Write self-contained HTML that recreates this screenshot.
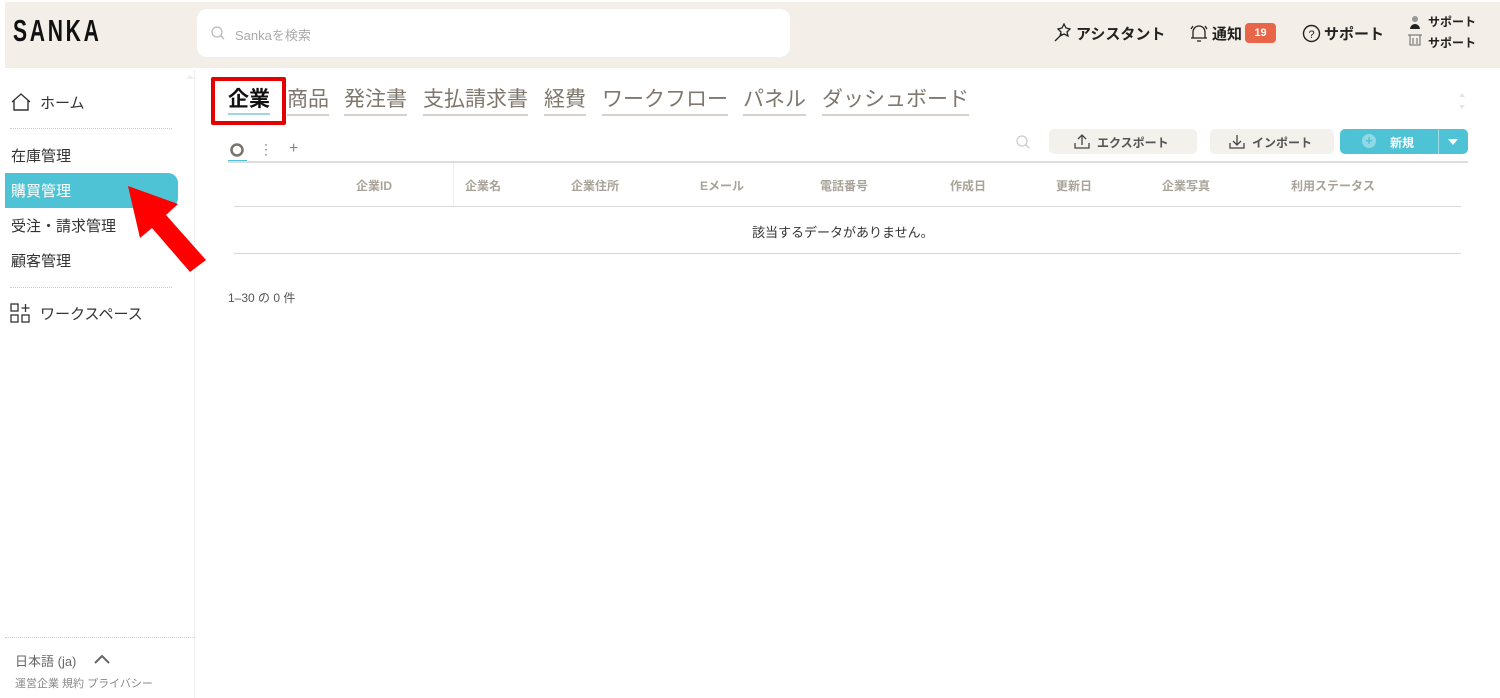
<!DOCTYPE html>
<html><head><meta charset="utf-8"><style>
*{box-sizing:border-box;margin:0;padding:0}
body{width:1500px;height:698px;overflow:hidden;background:#fff;font-family:"Liberation Sans","Noto Sans CJK JP",sans-serif;color:#333;position:relative}
.a{position:absolute;white-space:nowrap}
#hdr{position:absolute;left:5px;top:2px;width:1495px;height:66px;background:#f3efe8}
.th{position:absolute;top:177px;font-size:12px;color:#a9a39a;font-weight:bold}
.tab{position:absolute;top:87px;font-size:21px;color:#7f776d;border-bottom:2px solid #d6d1ca;padding-bottom:1px;line-height:26px}
.btn{position:absolute;top:129px;height:25px;border-radius:5px;background:#f3f1ec;font-size:12px;font-weight:bold;color:#555;line-height:25px}
.si{position:absolute;left:11px;font-size:15px}
</style></head><body>
<div id="hdr"></div>
<div class="a" style="left:13px;top:13px;font-size:31px;font-weight:bold;letter-spacing:4px;color:#111;transform:scaleX(.68);transform-origin:left">SANKA</div>
<div class="a" style="left:197px;top:9px;width:593px;height:48px;background:#fff;border-radius:10px"></div>
<svg class="a" style="left:210px;top:25px" width="16" height="16"><circle cx="7" cy="7" r="5" fill="none" stroke="#bbb" stroke-width="1.3"/><line x1="10.5" y1="10.5" x2="14" y2="14" stroke="#bbb" stroke-width="1.5"/></svg>
<div class="a" style="left:235px;top:25px;font-size:13px;color:#aaa">Sankaを検索</div>
<svg class="a" style="left:1053px;top:23px" width="20" height="20"><path d="M2 18L9 11M9 5l2-4 2 4 4 1-3 3 1 4-4-2-4 2 1-4-3-3z" fill="none" stroke="#222" stroke-width="1.3"/></svg>
<div class="a" style="left:1076px;top:23px;font-size:15px;font-weight:bold;color:#222">アシスタント</div>
<svg class="a" style="left:1189px;top:23px" width="20" height="20"><path d="M4 15V9a6 6 0 0112 0v6M2 15h16M8 18h4M2 6l2-3M18 6l-2-3" fill="none" stroke="#222" stroke-width="1.3"/></svg>
<div class="a" style="left:1212px;top:23px;font-size:15px;font-weight:bold;color:#222">通知</div>
<div class="a" style="left:1245px;top:23px;width:31px;height:20px;background:#e8654a;border-radius:4px;color:#fff;font-size:11px;font-weight:bold;text-align:center;line-height:20px">19</div>
<svg class="a" style="left:1302px;top:24px" width="19" height="19"><circle cx="9.5" cy="9.5" r="8" fill="none" stroke="#222" stroke-width="1.4"/><text x="9.5" y="14" font-size="11" text-anchor="middle" fill="#222" font-family="Liberation Sans">?</text></svg>
<div class="a" style="left:1324px;top:23px;font-size:15px;font-weight:bold;color:#222">サポート</div>
<svg class="a" style="left:1407px;top:14px" width="16" height="36"><circle cx="8" cy="5" r="3" fill="#999"/><path d="M3 15a5 5 0 0110 0z" fill="#222"/><path d="M1 21h14M3 21v10h10V21M6 24v6M10 24v6" fill="none" stroke="#666" stroke-width="1"/></svg>
<div class="a" style="left:1428px;top:13px;font-size:12px;font-weight:bold;color:#222">サポート</div>
<div class="a" style="left:1428px;top:34px;font-size:12px;font-weight:bold;color:#222">サポート</div>

<div class="a" style="left:194px;top:70px;width:1px;height:628px;background:#eee"></div>
<svg class="a" style="left:10px;top:92px" width="22" height="20"><path d="M2 10L11 2l9 8M4 8v10h14V8" fill="none" stroke="#333" stroke-width="1.4"/></svg>
<div class="a" style="left:40px;top:92px;font-size:15px">ホーム</div>
<div class="a" style="left:10px;top:128px;width:162px;border-top:1px dotted #ccc"></div>
<div class="si" style="top:145px">在庫管理</div>
<div class="a" style="left:5px;top:173px;width:173px;height:35px;background:#4ec3d6;border-radius:0 10px 10px 0"></div>
<div class="si" style="top:180px;color:#fff">購買管理</div>
<div class="si" style="top:215px">受注・請求管理</div>
<div class="si" style="top:250px">顧客管理</div>
<div class="a" style="left:10px;top:287px;width:162px;border-top:1px dotted #ccc"></div>
<svg class="a" style="left:10px;top:303px" width="22" height="22"><rect x="1" y="1" width="7" height="7" fill="none" stroke="#333" stroke-width="1.3"/><rect x="1" y="12" width="7" height="7" fill="none" stroke="#333" stroke-width="1.3"/><rect x="12" y="12" width="7" height="7" fill="none" stroke="#333" stroke-width="1.3"/><path d="M15.5 1v8M11.5 5h8" stroke="#333" stroke-width="1.3"/></svg>
<div class="a" style="left:40px;top:303px;font-size:15px">ワークスペース</div>
<svg class="a" style="left:186px;top:74px" width="8" height="6"><path d="M0 5l4-4 4 4z" fill="#eee"/></svg>
<div class="a" style="left:5px;top:637px;width:190px;border-top:1px dotted #ccc"></div>
<div class="a" style="left:15px;top:651px;font-size:13px;color:#666">日本語 (ja)</div>
<svg class="a" style="left:93px;top:653px" width="18" height="12"><path d="M2 10l7-7 7 7" fill="none" stroke="#666" stroke-width="2"/></svg>
<div class="a" style="left:15px;top:675px;font-size:11px;color:#888">運営企業 規約 プライバシー</div>

<div class="a" style="left:211px;top:77px;width:75px;height:48px;border:4px solid #e50000;border-radius:2px"></div>
<div class="a" style="left:228px;top:87px;font-size:21px;font-weight:bold;color:#111;line-height:26px;border-bottom:2px solid #9fd7e0">企業</div>
<div class="tab" style="left:287px">商品</div>
<div class="tab" style="left:344px">発注書</div>
<div class="tab" style="left:423px">支払請求書</div>
<div class="tab" style="left:544px">経費</div>
<div class="tab" style="left:602px">ワークフロー</div>
<div class="tab" style="left:743px">パネル</div>
<div class="tab" style="left:822px">ダッシュボード</div>
<svg class="a" style="left:1458px;top:91px" width="8" height="20"><path d="M1 6l3-4 3 4zM1 14l3 4 3-4z" fill="#e8e4de"/></svg>

<svg class="a" style="left:228px;top:142px" width="20" height="18"><circle cx="9" cy="8" r="5.5" fill="none" stroke="#7a736a" stroke-width="2.5"/></svg>
<div class="a" style="left:228px;top:160px;width:19px;height:2px;background:#4ec3d6"></div>
<div class="a" style="left:259px;top:141px;font-size:14px;color:#888">⋮</div>
<div class="a" style="left:289px;top:140px;font-size:16px;color:#888">+</div>
<svg class="a" style="left:1015px;top:134px" width="16" height="16"><circle cx="7" cy="7" r="5" fill="none" stroke="#ccc" stroke-width="1.3"/><line x1="10.5" y1="10.5" x2="14" y2="14" stroke="#ccc" stroke-width="1.5"/></svg>
<div class="btn" style="left:1049px;width:148px"></div>
<svg class="a" style="left:1074px;top:133px" width="16" height="16"><path d="M1 10v5h14v-5M8 12V2M4 6l4-4 4 4" fill="none" stroke="#444" stroke-width="1.3"/></svg>
<div class="a" style="left:1097px;top:134px;font-size:12px;font-weight:bold;color:#555">エクスポート</div>
<div class="btn" style="left:1210px;width:124px"></div>
<svg class="a" style="left:1229px;top:133px" width="16" height="16"><path d="M1 10v5h14v-5M8 2v10M4 8l4 4 4-4" fill="none" stroke="#444" stroke-width="1.3"/></svg>
<div class="a" style="left:1252px;top:134px;font-size:12px;font-weight:bold;color:#555">インポート</div>
<div class="a" style="left:1340px;top:129px;width:128px;height:25px;background:#4ec3d6;border-radius:5px"></div>
<div class="a" style="left:1438px;top:129px;width:1px;height:25px;background:#9fdde7"></div>
<div class="a" style="left:1362px;top:134px;width:14px;height:14px;border-radius:50%;background:#8fd8e4;color:#4ec3d6;font-size:13px;font-weight:bold;text-align:center;line-height:14px">+</div>
<div class="a" style="left:1390px;top:134px;font-size:12px;font-weight:bold;color:#fff">新規</div>
<svg class="a" style="left:1447px;top:138px" width="12" height="8"><path d="M1 1h10l-5 6z" fill="#fff"/></svg>

<div class="a" style="left:228px;top:161px;width:1240px;height:2px;background:#ddd"></div>
<div class="a" style="left:453px;top:163px;width:1px;height:43px;background:#eee"></div>
<div class="th" style="left:356px">企業ID</div>
<div class="th" style="left:465px">企業名</div>
<div class="th" style="left:571px">企業住所</div>
<div class="th" style="left:700px">Eメール</div>
<div class="th" style="left:820px">電話番号</div>
<div class="th" style="left:950px">作成日</div>
<div class="th" style="left:1056px">更新日</div>
<div class="th" style="left:1162px">企業写真</div>
<div class="th" style="left:1291px">利用ステータス</div>
<div class="a" style="left:234px;top:206px;width:1227px;height:1px;background:#d8d8d8"></div>
<div class="a" style="left:752px;top:222px;font-size:13px;color:#333">該当するデータがありません。</div>
<div class="a" style="left:234px;top:253px;width:1227px;height:1px;background:#d8d8d8"></div>
<div class="a" style="left:228px;top:289px;font-size:12px;color:#555">1–30 の 0 件</div>

<svg class="a" style="left:120px;top:178px" width="90" height="95"><path d="M8 8L58 26 46 37 86 82 70 94 32 50 20 60z" fill="#f00"/></svg>
</body></html>
